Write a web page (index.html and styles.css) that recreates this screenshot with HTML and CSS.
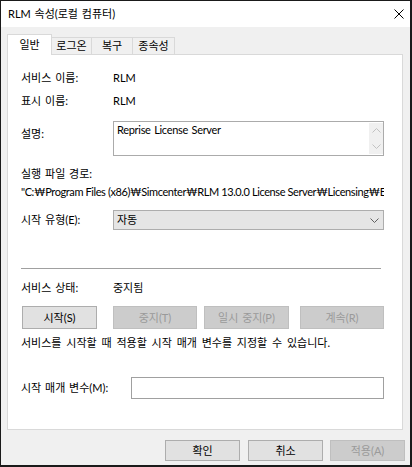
FILE: index.html
```html
<!DOCTYPE html>
<html lang="ko">
<head>
  <meta charset="UTF-8">
  <title>RLM 속성(로컬 컴퓨터)</title>
  <link rel="stylesheet" href="styles.css">
</head>
<body>

  <div class="window">
    <!-- TITLE BAR -->
    <div class="titlebar">
      <span>RLM 속성(로컬 컴퓨터)</span>
      <svg class="close" width="10" height="10" viewBox="0 0 10 10">
        <path d="M0.5 0.5L9.5 9.5M9.5 0.5L0.5 9.5" stroke="#000" stroke-width="1" fill="none"/>
      </svg>
    </div>

    <div class="dialog">
      <!-- TABS -->
      <div class="tabs">
        <div class="tab active">일반</div>
        <div class="tab t-logon">로그온</div>
        <div class="tab t-recovery">복구</div>
        <div class="tab t-deps">종속성</div>
      </div>

      <!-- GENERAL PAGE -->
      <div class="panel">
        <div class="row r-name">
          <span class="label">서비스 이름:</span>
          <span>RLM</span>
        </div>
        <div class="row r-display">
          <span class="label">표시 이름:</span>
          <span>RLM</span>
        </div>
        <div class="row r-desc">
          <span class="label">설명:</span>
          <div class="desc">
            <div class="desc-text">Reprise License Server</div>
            <div class="scrollbar">
              <svg width="9" height="5" viewBox="0 0 9 5"><path d="M0.5 4.5L4.5 0.5L8.5 4.5" stroke="#c2c2c2" fill="none"/></svg>
              <svg width="9" height="5" viewBox="0 0 9 5"><path d="M0.5 0.5L4.5 4.5L8.5 0.5" stroke="#c2c2c2" fill="none"/></svg>
            </div>
          </div>
        </div>
        <div class="r-pathlabel">실행 파일 경로:</div>
        <div class="path">"C:₩Program Files (x86)₩Simcenter₩RLM 13.0.0 License Server₩Licensing₩E</div>
        <div class="row r-start">
          <span class="label">시작 유형(E):</span>
          <div class="combo">
            <span>자동</span>
            <svg width="9" height="5" viewBox="0 0 9 5"><path d="M0.5 0.5L4.5 4.5L8.5 0.5" stroke="#606060" fill="none"/></svg>
          </div>
        </div>

        <div class="separator"></div>

        <div class="row r-status">
          <span class="label">서비스 상태:</span>
          <span>중지됨</span>
        </div>
        <div class="svc-buttons">
          <button class="btn b-start">시작(S)</button>
          <button class="btn b-stop" disabled>중지(T)</button>
          <button class="btn b-pause" disabled>일시 중지(P)</button>
          <button class="btn b-resume" disabled>계속(R)</button>
        </div>
        <div class="help">서비스를 시작할 때 적용할 시작 매개 변수를 지정할 수 있습니다.</div>
        <div class="row r-param">
          <span class="label wide">시작 매개 변수(M):</span>
          <div class="input"></div>
        </div>
      </div>

      <!-- DIALOG BUTTONS -->
      <div class="actions">
        <button class="btn b-ok">확인</button>
        <button class="btn b-cancel">취소</button>
        <button class="btn b-apply" disabled>적용(A)</button>
      </div>
    </div>
  </div>

</body>
</html>
```

FILE: styles.css
```css
:root {
  --face: #f0f0f0;
  --tab-border: #d9d9d9;
  --btn-bg: #e1e1e1;
  --btn-border: #adadad;
  --off-bg: #cccccc;
  --off-border: #bfbfbf;
  --off-text: #9a9a9a;
}
body {
  margin: 0;
  font-family: Lato, "Noto Sans CJK KR", sans-serif;
  font-size: 11px;
  line-height: 16px;
  word-spacing: 1px;
  color: #000;
  background: #fff;
}
.window {
  width: 412px;
  height: 467px;
  box-sizing: border-box;
  border: 1px solid #1a1a1a;
  border-right-width: 2px;
  border-bottom-width: 2px;
  display: flex;
  flex-direction: column;
}
.titlebar {
  height: 26px;
  flex: none;
  display: flex;
  align-items: center;
  justify-content: space-between;
  padding: 0 6px 0 7px;
  background: #fff;
}
.dialog {
  flex: 1;
  background: var(--face);
  padding: 6px 7px 0 6px;
}

/* tabs */
.tabs {
  display: flex;
  align-items: flex-end;
  height: 21px;
}
.tab {
  box-sizing: border-box;
  height: 17px;
  line-height: 16px;
  text-align: center;
  border-top: 1px solid var(--tab-border);
  border-right: 1px solid var(--tab-border);
  background: var(--face);
}
.tab.active {
  position: relative;
  z-index: 1;
  width: 45px;
  height: 21px;
  line-height: 20px;
  margin-bottom: -1px;
  border-left: 1px solid var(--tab-border);
  background: #fff;
}
.t-logon { width: 40px; }
.t-recovery { width: 41px; }
.t-deps { width: 42px; }

.panel {
  box-sizing: border-box;
  height: 376px;
  border: 1px solid var(--tab-border);
  background: #fff;
  padding: 15px 18px 0 13px;
}
.row {
  display: flex;
  align-items: center;
}
.label {
  width: 92px;
  flex: none;
}
.label.wide {
  width: 110px;
}
.r-display { margin-top: 7px; }
.r-desc {
  margin-top: 12px;
  align-items: flex-start;
}
.r-desc .label { margin-top: 5px; }
.desc {
  flex: 1;
  height: 35px;
  box-sizing: border-box;
  border: 1px solid #ababab;
  display: flex;
}
.desc-text {
  flex: 1;
  padding: 0 3px;
  line-height: 15px;
  letter-spacing: -0.3px;
}
.scrollbar {
  width: 14px;
  margin: 1px 0;
  background: #f0f0f0;
  display: flex;
  flex-direction: column;
  align-items: center;
  justify-content: space-around;
}
.r-pathlabel { margin-top: 10px; }
.path {
  margin-top: 2px;
  white-space: nowrap;
  overflow: hidden;
  word-spacing: 0;
  letter-spacing: -0.4px;
}
.r-start { margin-top: 10px; }
.combo {
  flex: 1;
  height: 20px;
  box-sizing: border-box;
  border: 1px solid var(--btn-border);
  background: #e5e5e5;
  display: flex;
  align-items: center;
  justify-content: space-between;
  padding: 0 4px 0 3px;
}
.separator {
  margin: 38px 3px 0 0;
  border-top: 1px solid #a0a0a0;
}
.r-status { margin-top: 11px; }

/* buttons */
.btn {
  box-sizing: border-box;
  height: 23px;
  padding: 0;
  font: inherit;
  word-spacing: inherit;
  color: #000;
  background: var(--btn-bg);
  border: 1px solid var(--btn-border);
  border-radius: 0;
}
.btn:disabled {
  background: var(--off-bg);
  border-color: var(--off-border);
  color: var(--off-text);
}
.svc-buttons {
  display: flex;
  margin-top: 10px;
}
.b-start { width: 75px; margin-left: 1px; }
.b-stop { width: 84px; margin-left: 16px; }
.b-pause { width: 85px; margin-left: 7px; }
.b-resume { width: 84px; margin-left: 11px; }
.help {
  margin-top: 6px;
  word-spacing: 2px;
}
.r-param { margin-top: 26px; }
.input {
  flex: 1;
  height: 22px;
  box-sizing: border-box;
  border: 1px solid #a0a0a0;
  background: #fff;
}
.actions {
  display: flex;
  justify-content: flex-end;
  margin: 10px -2px 0 0;
}
.actions .btn {
  width: 75px;
  height: 21px;
}
.b-ok { margin-right: 8px; }
.b-cancel { margin-right: 7px; }
```
